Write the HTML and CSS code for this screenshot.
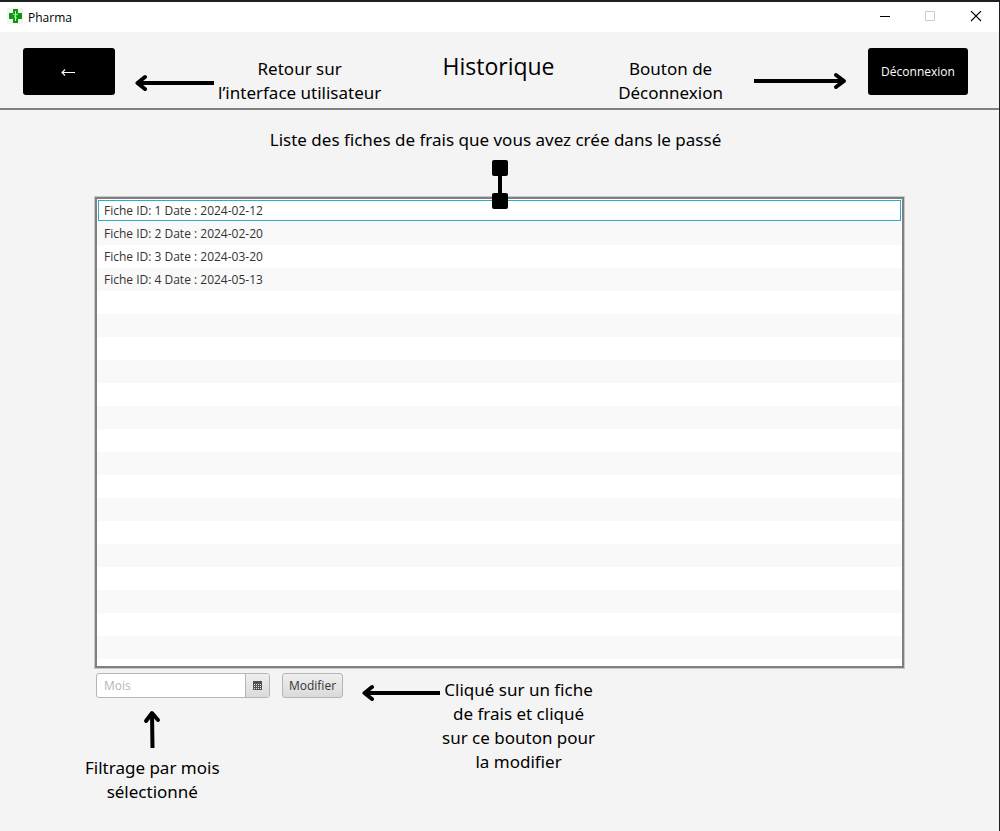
FILE: index.html
```html
<!DOCTYPE html>
<html lang="fr">
<head>
<meta charset="utf-8">
<title>Pharma</title>
<link rel="stylesheet" href="styles.css">
</head>
<body>
<div class="window">
  <div class="titlebar">
    <svg class="app-icon" width="16" height="16" viewBox="0 0 16 16" aria-hidden="true">
      <rect width="16" height="16" fill="#f3f3f3"/>
      <path d="M6 1h5v4h4v6h-4v4H6v-4H2V5h4z" fill="#0a9a0a"/>
      <path d="M8.500 3v10M6 6l2 1h1l2-1M7 9l3 1" fill="none" stroke="#c9efc9" stroke-width="1"/>
    </svg>
    <span class="app-name">Pharma</span>
    <div class="window-controls">
      <button class="window-button" type="button" aria-label="Réduire">
        <svg width="12" height="12" viewBox="0 0 12 12"><path d="M2 5.500h10" stroke="#000"/></svg>
      </button>
      <button class="window-button" type="button" aria-label="Agrandir" disabled>
        <svg width="12" height="12" viewBox="0 0 12 12"><path d="M1.500 .5h9v9h-9z" fill="none" stroke="#ccc"/></svg>
      </button>
      <button class="window-button" type="button" aria-label="Fermer">
        <svg width="12" height="12" viewBox="0 0 12 12"><path d="M1 0l10 10M11 0L1 10" stroke="#000" stroke-width="1.1"/></svg>
      </button>
    </div>
  </div>

  <header class="header">
    <div class="header-side">
      <button class="action back" type="button" aria-label="Retour">
        <svg width="16" height="10" viewBox="0 0 16 10"><path d="M14 5.500H1M4 2.500L1 5.500l3 3" fill="none" stroke="#fff" stroke-width="1.1"/></svg>
      </button>
      <svg class="arrow arrow-left" width="79" height="18" viewBox="0 0 79 18" aria-hidden="true">
        <path d="M79 9H4" stroke="#000" stroke-width="4"/><path d="M10 3L2.500 9l7.500 6" fill="none" stroke="#000" stroke-width="4" stroke-linecap="round" stroke-linejoin="round"/>
      </svg>
      <p class="note header-note">Retour sur<br>l’interface utilisateur</p>
    </div>
    <h1 class="title">Historique</h1>
    <div class="header-side header-end">
      <p class="note header-note">Bouton de<br>Déconnexion</p>
      <svg class="arrow arrow-right" width="93" height="18" viewBox="0 0 93 18" aria-hidden="true">
        <path d="M0 9h89" fill="none" stroke="#000" stroke-width="4"/><path d="M82 3l8 6-8 6" fill="none" stroke="#000" stroke-width="4" stroke-linecap="round" stroke-linejoin="round"/>
      </svg>
      <button class="action logout" type="button">Déconnexion</button>
    </div>
  </header>

  <main class="content">
    <p class="note list-note">Liste des fiches de frais que vous avez crée dans le passé</p>
    <svg class="connector" width="16" height="49" viewBox="0 0 16 49" aria-hidden="true">
      <path d="M8 8v34" stroke="#000" stroke-width="4"/>
      <rect width="16" height="16" rx="2"/><rect y="33" width="16" height="16" rx="2"/>
    </svg>
    <ul class="list">
      <li class="row focused">Fiche ID: 1 Date : 2024-02-12</li>
      <li class="row">Fiche ID: 2 Date : 2024-02-20</li>
      <li class="row">Fiche ID: 3 Date : 2024-03-20</li>
      <li class="row">Fiche ID: 4 Date : 2024-05-13</li>
    </ul>
  </main>

  <footer class="footer">
    <div class="filter">
      <div class="controls">
        <div class="date-picker">
          <input class="date-input" type="text" placeholder="Mois" aria-label="Mois">
          <button class="date-button" type="button" aria-label="Ouvrir le calendrier">
            <svg width="9" height="9" viewBox="0 0 9 9"><path d="M0 0h9v9H0z" fill="#505050"/><path d="M1 3.500h7M1 5.500h7M1 7.500h7" stroke="#e8e8e8" stroke-dasharray="1 1"/></svg>
          </button>
        </div>
        <button class="edit" type="button">Modifier</button>
      </div>
      <div class="filter-hint">
        <svg width="18" height="38" viewBox="0 0 18 38" aria-hidden="true">
          <path d="M9.500 38L9 4" stroke="#000" stroke-width="4"/><path d="M3 11l6-8 6 7" fill="none" stroke="#000" stroke-width="4" stroke-linecap="round" stroke-linejoin="round"/>
        </svg>
        <p class="note">Filtrage par mois<br>sélectionné</p>
      </div>
    </div>
    <svg class="edit-arrow" width="78" height="18" viewBox="0 0 78 18" aria-hidden="true">
      <path d="M78 9H4" stroke="#000" stroke-width="4"/><path d="M10 3L2.500 9l7.500 6" fill="none" stroke="#000" stroke-width="4" stroke-linecap="round" stroke-linejoin="round"/>
    </svg>
    <p class="note edit-note">Cliqué sur un fiche<br>de frais et cliqué<br>sur ce bouton pour<br>la modifier</p>
  </footer>
</div>
</body>
</html>
```

FILE: styles.css
```css
* {
  box-sizing: border-box;
}

body {
  margin: 0;
  background: #1e1f22;
  color: #000;
  font-family: "Open Sans", sans-serif;
  font-size: 12px;
}

button,
input {
  margin: 0;
  padding: 0;
  font: inherit;
}

svg {
  display: block;
  flex: none;
}

.window {
  min-height: 100vh;
  border-top: 2px solid #1e1f22;
  border-right: 1px solid #1e1f22;
  background: #f4f4f4;
}

.titlebar {
  display: flex;
  align-items: center;
  height: 30px;
  padding-left: 7px;
  background: #fff;
}

.app-icon {
  margin-bottom: 2px;
}

.app-name {
  margin-left: 5px;
}

.window-controls {
  display: flex;
  align-self: stretch;
  margin-left: auto;
}

.window-button {
  display: flex;
  align-items: center;
  justify-content: center;
  width: 46px;
  border: 0;
  background: none;
}

.header {
  display: grid;
  grid-template-columns: 1fr auto 1fr;
  padding: 16px 31px 3px 23px;
  border-bottom: 2px solid #808080;
}

.header-side {
  display: flex;
  align-items: flex-start;
}

.header-end {
  justify-content: flex-end;
}

.note {
  margin: 0;
  font-family: "Noto Sans", sans-serif;
  font-size: 17px;
  line-height: 24px;
  text-align: center;
  white-space: nowrap;
}

.header-note {
  margin-top: 9px;
}

.title {
  margin: 0;
  padding-left: 6px;
  font-size: 23px;
  font-weight: 400;
  line-height: 36px;
}

.action {
  display: flex;
  align-items: center;
  justify-content: center;
  height: 47px;
  border: 0;
  border-radius: 3px;
  background: #000;
  color: #fff;
}

.back {
  width: 92px;
}

.logout {
  width: 100px;
}

.arrow-left {
  margin: 26px 4px 0 20px;
}

.arrow-right {
  margin: 24px 21px 0 31px;
}

.content {
  position: relative;
  padding: 18px 95px 0;
}

.list-note {
  padding-right: 8px;
}

.connector {
  position: absolute;
  top: 50px;
  left: calc(50% - 8px);
}

.list {
  height: 471px;
  margin: 45px 0 0;
  padding: 0;
  border: 2px solid #808080;
  box-shadow: 0 0 0 1px #c8c8c8;
  background: repeating-linear-gradient(#fff 0 23px, #f9f9f9 23px 46px);
  list-style: none;
}

.row {
  height: 23px;
  padding: 0 7px;
  color: #333;
  line-height: 23px;
}

.focused {
  height: 21px;
  margin: 1px;
  padding: 0 5px;
  border: 1px solid #2fa9d0;
  line-height: 19px;
}

.footer {
  display: flex;
  align-items: flex-start;
  padding: 5px 85px 24px;
}

.filter {
  display: flex;
  flex-direction: column;
  align-items: flex-start;
}

.controls {
  display: flex;
  gap: 12px;
  padding-left: 11px;
}

.date-picker {
  display: flex;
  width: 174px;
  height: 25px;
  border: 1px solid #b5b5b5;
  border-radius: 3px;
  background: #fff;
  overflow: hidden;
}

.date-input {
  flex: 1;
  min-width: 0;
  padding: 0 7px;
  border: 0;
  background: none;
}

.date-input::placeholder {
  color: #b4b4b4;
}

.date-button {
  display: flex;
  align-items: center;
  justify-content: center;
  width: 24px;
  border: 0;
  border-left: 1px solid #b5b5b5;
  background: linear-gradient(#efefef, #dadada);
}

.edit {
  width: 61px;
  height: 25px;
  border: 1px solid #b5b5b5;
  border-radius: 3px;
  background: linear-gradient(#efefef, #dadada);
  color: #333;
}

.filter-hint {
  display: flex;
  flex-direction: column;
  align-items: center;
  gap: 8px;
  margin-top: 12px;
}

.edit-arrow {
  margin: 11px 2px 0 19px;
}

.edit-note {
  margin-top: 5px;
}
```
